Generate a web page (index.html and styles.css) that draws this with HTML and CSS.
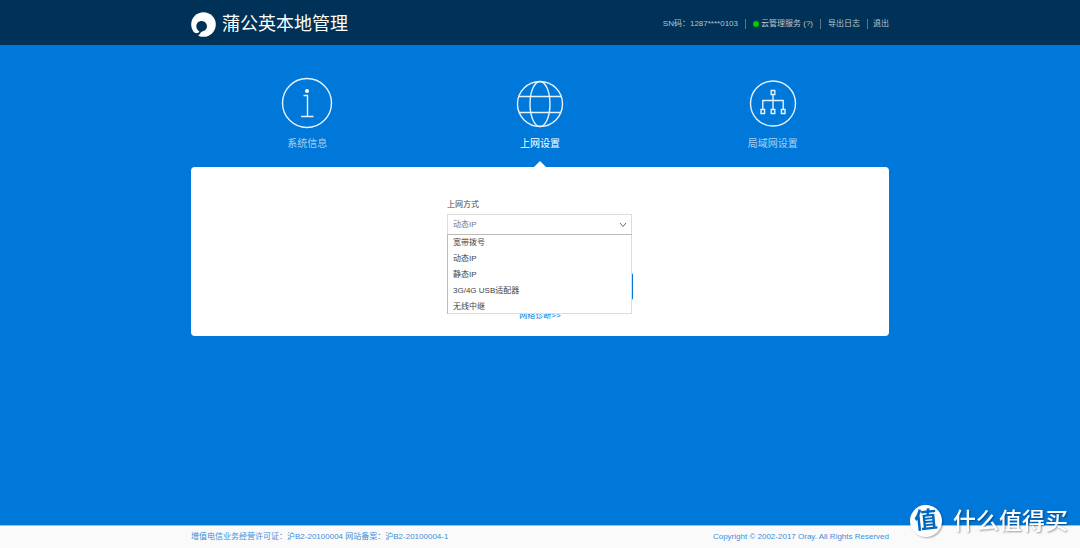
FILE: index.html
```html
<!DOCTYPE html>
<html lang="zh-CN">
<head>
<meta charset="utf-8">
<title>蒲公英本地管理</title>
<link rel="stylesheet" href="styles.css">
</head>
<body>
<header class="topbar">
  <div class="wrap topbar-inner">
    <div class="brand">
      <svg class="brand-logo" viewBox="0 0 25 25" aria-hidden="true">
        <circle cx="12.5" cy="12.5" r="12.3" fill="#fff"/>
        <path d="M8.4 19.6 C5 17.4 4.4 13 6.8 10.6 C9.4 8 14 8.8 15.4 12 C17 15.6 14.8 19 11.2 19.4 C9.6 19.6 9.6 21.4 8.2 22.4 L6.2 25 L2.6 21.4 L3.2 20.4 C5 21.6 7.4 21.6 8.4 19.6 Z" fill="#003156"/>
      </svg>
      <h1 class="brand-name">蒲公英本地管理</h1>
    </div>
    <nav class="tools">
      <span class="tool">SN码：1287****0103</span>
      <a class="tool" href="#"><span class="dot"></span>云管理服务 (?)</a>
      <a class="tool" href="#">导出日志</a>
      <a class="tool tool-last" href="#">退出</a>
    </nav>
  </div>
</header>

<main class="wrap main">
  <nav class="tabs">
    <a class="tab" href="#">
      <svg class="tab-icon" viewBox="0 0 52 52" aria-hidden="true">
        <circle cx="26" cy="26" r="24.5"/>
        <circle cx="26" cy="14" r="2" class="solid"/>
        <path d="M22.5 18.5H26.5V39.5M20 39.5H32.5"/>
      </svg>
      <span>系统信息</span>
    </a>
    <a class="tab active" href="#">
      <svg class="tab-icon" viewBox="0 0 52 52" aria-hidden="true">
        <circle cx="26" cy="27" r="22.5"/>
        <ellipse cx="26" cy="27" rx="10" ry="22.5"/>
        <path d="M5 19.5H47M5 35.5H47"/>
      </svg>
      <span>上网设置</span>
    </a>
    <a class="tab" href="#">
      <svg class="tab-icon" viewBox="0 0 52 52" aria-hidden="true">
        <circle cx="26" cy="26.5" r="22.5"/>
        <path d="M24.2 13.5h3.6v4h-3.6zM14 32.5h3.6v4h-3.6zM24.2 32.5h3.6v4h-3.6zM34.4 32.5h3.6v4h-3.6zM26 17.5V32.5M15.8 32.5V23.5H36.2V32.5"/>
      </svg>
      <span>局域网设置</span>
    </a>
  </nav>

  <section class="card">
    <form class="form">
      <label class="label" for="mode">上网方式</label>
      <div class="select-box">
        <select class="select" id="mode">
          <option>宽带拨号</option>
          <option selected>动态IP</option>
          <option>静态IP</option>
          <option>3G/4G USB适配器</option>
          <option>无线中继</option>
        </select>
        <svg class="chevron" viewBox="0 0 8 6" aria-hidden="true"><path d="M1 1L4 4.5L7 1"/></svg>
        <ul class="menu">
          <li>宽带拨号</li>
          <li>动态IP</li>
          <li>静态IP</li>
          <li>3G/4G USB适配器</li>
          <li>无线中继</li>
        </ul>
      </div>
      <button class="save" type="button" aria-label="保存"></button>
      <a class="diagnose" href="#">网络诊断&gt;&gt;</a>
    </form>
  </section>
</main>

<footer class="footer">
  <div class="wrap footer-inner">
    <span>增值电信业务经营许可证：沪B2-20100004 网站备案：沪B2-20100004-1</span>
    <span>Copyright © 2002-2017 Oray. All Rights Reserved</span>
  </div>
</footer>

<div class="watermark">
  <span class="watermark-badge">值</span>
  <span class="watermark-text">什么值得买</span>
</div>
</body>
</html>
```

FILE: styles.css
```css
* {
  box-sizing: border-box;
}

body {
  margin: 0;
  min-height: 100vh;
  display: flex;
  flex-direction: column;
  background: #0078d9;
  color: #444;
  font: 8px/16px "Liberation Sans", "Noto Sans CJK SC", sans-serif;
}

a {
  color: inherit;
  text-decoration: none;
}

.wrap {
  width: 100%;
  max-width: 698px;
  margin: 0 auto;
}

.topbar {
  background: #003156;
}

.topbar-inner {
  display: flex;
  align-items: center;
  justify-content: space-between;
  min-height: 45px;
  padding-top: 3px;
}

.brand {
  display: flex;
  align-items: center;
  gap: 6px;
}

.brand-logo {
  width: 25px;
  height: 25px;
}

.brand-name {
  margin: 0;
  color: #fff;
  font-size: 18px;
  line-height: 26px;
  font-weight: 400;
}

.tools {
  display: flex;
  align-items: center;
  color: #b8c6d1;
}

.tool {
  display: flex;
  align-items: center;
  line-height: 10px;
  padding: 0 7px;
  border-right: 1px solid #5a7a93;
}

.tool-last {
  padding: 0 0 0 5px;
  border-right: 0;
}

.dot {
  width: 6px;
  height: 6px;
  margin-right: 2px;
  border-radius: 50%;
  background: #0c0;
}

.main {
  flex: 1;
}

.tabs {
  display: grid;
  grid-template-columns: repeat(3, 1fr);
}

.tab {
  position: relative;
  display: flex;
  flex-direction: column;
  align-items: center;
  gap: 7px;
  padding: 32px 0 15px;
  color: #a6d0f3;
  font-size: 10px;
}

.tab.active {
  color: #fff;
}

.tab.active::after {
  content: "";
  position: absolute;
  bottom: 0;
  border: 6px solid transparent;
  border-top: 0;
  border-bottom-color: #fff;
}

.tab-icon {
  width: 52px;
  height: 52px;
  fill: none;
  stroke: #e6f2fc;
  stroke-width: 1.4;
}

.tab-icon .solid {
  fill: #fff;
  stroke: none;
}

.card {
  padding: 30px 0 12px;
  border-radius: 4px;
  background: #fff;
}

.form {
  display: flex;
  flex-direction: column;
  width: 186px;
  margin: 0 auto;
}

.label {
  margin-bottom: 1px;
}

.select-box {
  position: relative;
  width: 185px;
}

.select {
  display: block;
  width: 100%;
  height: 21px;
  padding: 0 5px;
  border: 1px solid #ddd;
  border-radius: 0;
  appearance: none;
  background: #fff;
  color: #777;
  font: inherit;
}

.chevron {
  position: absolute;
  top: 8px;
  right: 5px;
  width: 8px;
  height: 6px;
  fill: none;
  stroke: #666;
}

.menu {
  position: absolute;
  top: 20px;
  left: 0;
  right: 0;
  margin: 0;
  padding: 0 6px;
  background: #fff;
  box-shadow: inset 1px 1px #bbb, inset -1px -1px #ddd;
  list-style: none;
}

.menu li {
  height: 16px;
  line-height: 18px;
}

.save {
  height: 27px;
  margin: 38px 0 8px;
  padding: 0;
  border: 0;
  border-radius: 2px;
  background: #0078d9;
}

.diagnose {
  align-self: center;
  color: #0078d9;
}

.footer {
  border-top: 1px solid #8fc3ef;
  background: #fafafa;
  color: #3d8fd9;
}

.footer-inner {
  display: flex;
  justify-content: space-between;
  padding: 3px 0;
}

.watermark {
  position: fixed;
  right: 12px;
  bottom: 11px;
  display: flex;
  align-items: center;
  gap: 11px;
}

.watermark-badge {
  width: 32px;
  height: 32px;
  border-radius: 50%;
  background: #fff;
  box-shadow: 1px 1px 2px #0005;
  color: #0068bd;
  font-size: 23px;
  font-weight: 700;
  line-height: 30px;
  text-align: center;
  transform: rotate(-6deg);
}

.watermark-text {
  color: #fff;
  font-size: 23px;
  font-weight: 500;
  line-height: 30px;
  text-shadow: 1px 1px 2px #0006;
}
```
